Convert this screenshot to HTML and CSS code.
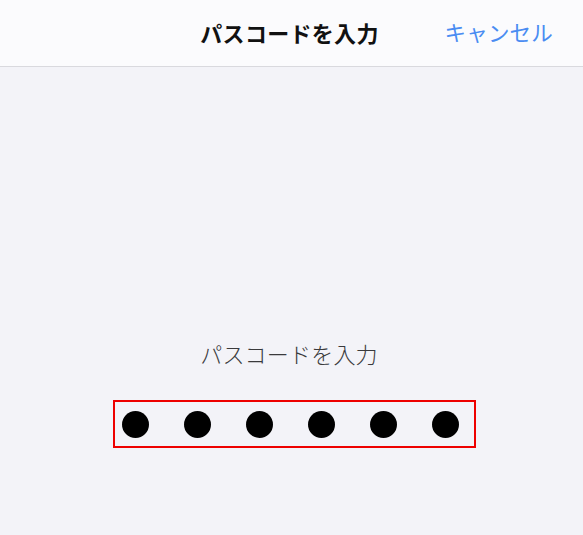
FILE: index.html
```html
<!DOCTYPE html>
<html lang="ja">
<head>
<meta charset="utf-8">
<link rel="stylesheet" href="styles.css">
</head>
<body>
<div class="screen">
  <header class="navbar">
    <div class="nav-title">パスコードを入力</div>
    <div class="nav-cancel">キャンセル</div>
  </header>
  <main class="content">
    <div class="prompt">パスコードを入力</div>
    <div class="dots-box">
      <span class="dot"></span>
      <span class="dot"></span>
      <span class="dot"></span>
      <span class="dot"></span>
      <span class="dot"></span>
      <span class="dot"></span>
    </div>
  </main>
</div>
</body>
</html>
```
FILE: styles.css
```css
html, body {
  margin: 0;
  padding: 0;
  background: #f2f2f7;
}
.screen {
  width: 583px;
  height: 535px;
  display: flex;
  flex-direction: column;
  font-family: "Noto Sans CJK JP", "Noto Sans", sans-serif;
  background: #f3f3f8;
  overflow: hidden;
}
.navbar {
  height: 67px;
  flex: none;
  background: #fbfbfd;
  border-bottom: 1px solid #d9d9de;
  display: grid;
  grid-template-columns: 1fr auto 1fr;
  align-items: center;
  box-sizing: border-box;
}
.nav-title {
  grid-column: 2;
  font-size: 22px;
  font-weight: 700;
  color: #111;
  letter-spacing: 0.3px;
  line-height: 1;
  margin-top: -2px;
  margin-left: -4px;
}
.nav-cancel {
  grid-column: 3;
  justify-self: end;
  margin-right: 30px;
  font-size: 21.5px;
  color: #4a8cf2;
  letter-spacing: 0.2px;
  line-height: 1;
  margin-top: -2px;
}
.content {
  flex: 1;
  display: flex;
  flex-direction: column;
  align-items: center;
  padding-top: 275px;
}
.prompt {
  font-size: 22px;
  color: #3a3a3c;
  font-weight: 300;
  letter-spacing: 0.2px;
  line-height: 1;
  margin-left: -5px;
}
.dots-box {
  margin-top: 36px;
  margin-left: 6px;
  width: 363px;
  height: 48px;
  box-sizing: border-box;
  border: 2px solid #ee0000;
  display: flex;
  align-items: center;
  padding-left: 7px;
  gap: 35px;
}
.dot {
  width: 27px;
  height: 27px;
  border-radius: 50%;
  background: #000;
  flex: none;
}
```
